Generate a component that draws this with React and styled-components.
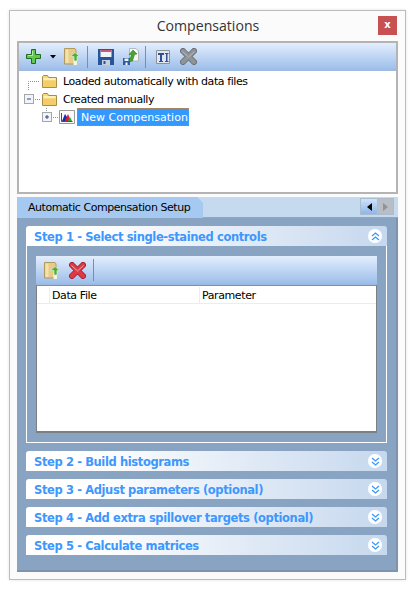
import React from "react";
import styled, { createGlobalStyle } from "styled-components";

const Global = createGlobalStyle`
  html, body { margin: 0; padding: 0; background: #fff; }
  body { font-family: "DejaVu Sans", sans-serif; font-size: 11px; color: #000; }
  * { box-sizing: border-box; }
`;
const Page = styled.div`
  width: 418px; height: 591px; padding: 10px 12px 11px 9px;
`;
const Window = styled.div`
  width: 397px; height: 570px; background: #fbfbfb; border: 1px solid #bcbcbc;
  box-shadow: 0 0 3px rgba(0,0,0,.12); display: flex; flex-direction: column; padding: 0 7px 7px 7px;
`;
const TitleBar = styled.div`
  height: 30px; flex: none; display: flex; align-items: center; justify-content: center; position: relative;
`;
const Title = styled.div`
  font-family: "Open Sans", sans-serif; font-size: 14.1px; color: #333; margin-bottom: 1px; margin-left: 1px;
`;
const Close = styled.div`
  position: absolute; right: 1px; top: 5px; width: 19px; height: 19px; background: #c75050;
  color: #fff; display: flex; align-items: center; justify-content: center;
  font: bold 10px "DejaVu Sans", sans-serif; padding-bottom: 2px;
`;
const TreePanel = styled.div`
  flex: none; height: 153px; border: 2px solid #b4b4b4; background: #fff;
  display: flex; flex-direction: column;
`;
const Toolbar = styled.div`
  flex: none; height: ${p => p.$h}px; display: flex; align-items: center; padding-left: ${p => p.$pad}px;
  background: linear-gradient(#e3eefd, #9cbdea);
  border-bottom: 1px solid #9db9df;
`;
const Sep = styled.div`
  flex: none; width: 1px; height: 22px; background: #7d8ea3; margin: 0 10px 0 ${p => p.$left}px;
`;
const Tool = styled.svg`
  flex: none; display: block; margin: ${p => p.$m || "0"};
`;
const Tree = styled.div`
  padding-top: 1px; display: flex; flex-direction: column;
`;
const Row = styled.div`
  height: 18px; display: flex; align-items: center;
`;
const Gutter = styled.svg`
  flex: none; display: block;
`;
const Label = styled.span`
  margin-left: 6px; letter-spacing: -0.42px; white-space: nowrap;
`;
const Selected = styled.span`
  margin-left: 2px; width: 112px; height: 18px; background: #3399ff; color: #fff;
  border: 1px dotted #a98a6a; padding: 1px 0 0 3px; line-height: 16px; letter-spacing: 0; white-space: nowrap;
`;
const TabsPanel = styled.div`
  flex: 1; margin-top: 3px; display: flex; flex-direction: column; min-height: 0;
`;
const TabStrip = styled.div`
  flex: none; height: 21px; background: #c5d9ef; border-bottom: 1px solid #a3a3a3; display: flex; align-items: stretch; justify-content: space-between;
`;
const Tab = styled.div`
  width: 186px; height: 21px; background: #a5c9f0; padding: 2px 0 0 11px; line-height: 18px; letter-spacing: -0.45px;
  clip-path: polygon(0 0, 180px 0, 186px 6px, 186px 100%, 0 100%); white-space: nowrap;
`;
const Arrows = styled.div`
  display: flex; margin: 1px 4px 0 0; height: 17px; border: 1px solid #a9bcd2;
`;
const Arrow = styled.div`
  width: 16px; display: flex; align-items: center; justify-content: center;
  background: ${p => p.$on ? "linear-gradient(#cfe2fa, #8db6e8)" : "#b9bec5"};
`;
const TabBody = styled.div`
  flex: 1; background: #88a4c2; padding: 8px 9px 0 9px; display: flex; flex-direction: column; gap: 8px;
  border-right: 2px solid #7f93ab; border-bottom: 2px solid #7f93ab; min-height: 0;
`;
const Step = styled.div`
  display: flex; flex-direction: column; flex: none;
`;
const StepHead = styled.div`
  height: 20px; display: flex; align-items: center; justify-content: space-between; padding: 1px 5px 0 8px;
  background: linear-gradient(90deg, #fff 0%, #fff 18%, #c6d8ee 100%);
  border-radius: 3px 3px 0 0;
  font-weight: 700; color: #3d97fd; letter-spacing: -0.38px; font-size: 11.5px;
`;
const Chevron = styled.div`
  width: 14px; height: 14px; margin-top: -1px; border-radius: 50%; background: #fff; display: flex; align-items: center; justify-content: center;
  box-shadow: 0 0 1px #dbe5f2;
`;
const StepBody = styled.div`
  height: 197px; border: 1px solid #fff; border-top: 0; padding: 10px 9px 9px 9px; display: flex; flex-direction: column;
`;
const Grid = styled.div`
  flex: 1; background: #fff; border: 1px solid #7c7f84; border-top: 0; border-bottom-width: 2px; display: flex; flex-direction: column;
`;
const GridHead = styled.div`
  height: 19px; display: flex; border-top: 1px solid #7f90a8; border-bottom: 1px solid #e4edf8; padding-top: 1px; line-height: 17px;
`;
const GridCell = styled.div`
  flex: ${p => p.$w ? `0 0 ${p.$w}px` : "1"}; padding-left: ${p => p.$pad}px;
  border-right: ${p => p.$w ? "1px solid #e4edf8" : "0"}; letter-spacing: -0.4px;
`;

const Plus = () => (
  <Tool width="17" height="17" viewBox="0 0 17 17">
    <path d="M6.500 1.500h4v5h5v4h-5v5h-4v-5h-5v-4h5z" fill="#63c852" stroke="#1f6b22" strokeWidth="1" />
    <path d="M7.500 3v4.500H3" fill="none" stroke="#b4ec9e" strokeWidth="1" />
  </Tool>
);
const Caret = () => (
  <Tool $m="0 8px" width="6" height="4" viewBox="0 0 6 4"><path d="M0 0h6L3 3.500z" fill="#000" /></Tool>
);
const Import = () => (
  <Tool width="16" height="17" viewBox="0 0 16 17">
    <path d="M.5.500h10.500l1 1.500V16H.5z" fill="#e8cc86" stroke="#b29a5d" />
    <path d="M1.500 1.500h3v13.500h-3z" fill="#f3e1ae" />
    <path d="M9.500 11h3.500v6H9.500z" fill="#f8f3df" />
    <path d="M11 4.500l4.500 4H13V13h-3V8.500H6.500z" fill="#4fae3a" stroke="#eaf5e0" strokeWidth=".6" />
  </Tool>
);
const Save = () => (
  <Tool width="16" height="16" viewBox="0 0 16 16">
    <path d="M0 0h16v16H0z" fill="#27559c" />
    <path d="M2.500 1h11v7h-11z" fill="#f1f3f8" />
    <path d="M2.500 1h11v2h-11z" fill="#c85a78" />
    <path d="M4 11h8v5H4z" fill="#c9d0dc" />
    <path d="M5.500 12h2v3h-2z" fill="#27559c" />
  </Tool>
);
const Export = () => (
  <Tool $m="0 0 0 9px" width="16" height="17" viewBox="0 0 16 17">
    <path d="M6.500.500h6.500l2.500 2.500V13h-9z" fill="#f7f7f7" stroke="#a6aab0" strokeWidth=".8" />
    <path d="M0 10h7v7H0z" fill="#2a5ca8" />
    <path d="M1.500 10.500h4v2.500h-4z" fill="#f3f3f3" />
    <path d="M2.500 14.500h2v2.500h-2z" fill="#fff" />
    <path d="M10 2l4 4-2.500.5-2 6.500-4 1 3-7-2.500-.5z" fill="#45a633" stroke="#1f6f22" strokeWidth=".5" />
  </Tool>
);
const TextTool = () => (
  <Tool width="14" height="14" viewBox="0 0 14 14">
    <path d="M.5.500h13v13H.5z" fill="#dfe7f2" stroke="#8d9198" />
    <path d="M2 3h6v2H6v6h1v1H3v-1h1V5H2z" fill="#2d4f93" />
    <path d="M9 3h3.500v1H11.500v7H12.500v1H9v-1h1V4H9z" fill="#35538e" />
  </Tool>
);
const Cross = ({ dark, main, light, m }) => (
  <Tool $m={m} width="17" height="17" viewBox="0 0 17 17">
    <path d="M3 3l11 11M14 3L3 14" stroke={dark} strokeWidth="6" strokeLinecap="round" />
    <path d="M3 3l11 11M14 3L3 14" stroke={main} strokeWidth="4.400" strokeLinecap="round" />
    <path d="M2.500 3.500l6 5.500 6-5.500" fill="none" stroke={light} strokeWidth="1" />
  </Tool>
);
const Folder = () => (
  <Tool $m="0 0 0 1px" width="15" height="13" viewBox="0 0 15 13">
    <path d="M.5 12.500V1.500l1-1h4l1 2h8v10z" fill="#f6d87c" stroke="#a98d46" />
    <path d="M1.500 4h12" stroke="#fff6cf" strokeWidth="1.500" />
    <path d="M1.500 6h12v6h-12z" fill="#f3cd68" />
  </Tool>
);
const ChartIcon = () => (
  <Tool width="16" height="14" viewBox="0 0 16 14">
    <path d="M.5.500h15v13H.5z" fill="#fafafa" stroke="#9a9a9a" />
    <path d="M3 11L6 4l2 3 1 4z" fill="#1a2ab8" />
    <path d="M6 11l3-7 3 7z" fill="#d6232a" />
    <path d="M9 11l2-4 2 4z" fill="#22a838" />
    <path d="M2.500 3v8.500H13.500" fill="none" stroke="#222" strokeWidth=".8" />
  </Tool>
);
const Expander = ({ x, y, plus }) => (
  <g>
    <rect x={x + .5} y={y + .5} width="9" height="9" fill="#f2f4f8" stroke="#a3a6ab" />
    <path d={`M${x + 3} ${y + 5}h4`} stroke="#2b4a8a" />
    {plus && <path d={`M${x + 5} ${y + 3}v4`} stroke="#2b4a8a" />}
  </g>
);
const Dots = { stroke: "#8f8f8f", strokeDasharray: "1 1", fill: "none" };
const Chev = ({ up }) => (
  <svg width="9" height="9" viewBox="0 0 9 9">
    <path d={up ? "M1 4l3.500-3L8 4M1 8l3.500-3L8 8" : "M1 1l3.500 3L8 1M1 5l3.500 3L8 5"} fill="none" stroke="#3d97fd" strokeWidth="1.300" />
  </svg>
);

const steps = ["Step 2 - Build histograms", "Step 3 - Adjust parameters (optional)", "Step 4 - Add extra spillover targets (optional)", "Step 5 - Calculate matrices"];

export default function App() {
  return (
    <Page>
      <Global />
      <Window>
        <TitleBar>
          <Title>Compensations</Title>
          <Close>x</Close>
        </TitleBar>
        <TreePanel>
          <Toolbar $h={28} $pad={6}>
            <Plus /><Caret /><Import /><Sep $left={7} /><Save /><Export /><Sep $left={6} /><TextTool />
            <Cross m="0 0 0 10px" dark="#666b70" main="#8f9499" light="#b4b8bc" />
          </Toolbar>
          <Tree>
            <Row>
              <Gutter width="22" height="18" viewBox="0 0 22 18"><path d="M9.500 18V9.500H21" {...Dots} /></Gutter>
              <Folder /><Label>Loaded automatically with data files</Label>
            </Row>
            <Row>
              <Gutter width="22" height="18" viewBox="0 0 22 18"><path d="M14 9.500H21" {...Dots} /><Expander x={5} y={4} plus={false} /></Gutter>
              <Folder /><Label>Created manually</Label>
            </Row>
            <Row>
              <Gutter width="40" height="18" viewBox="0 0 40 18"><path d="M27.500 0V5M32 9.500H39" {...Dots} /><Expander x={23} y={4} plus /></Gutter>
              <ChartIcon /><Selected>New Compensation</Selected>
            </Row>
          </Tree>
        </TreePanel>
        <TabsPanel>
          <TabStrip>
            <Tab>Automatic Compensation Setup</Tab>
            <Arrows>
              <Arrow $on><svg width="5" height="8" viewBox="0 0 5 8"><path d="M5 0v8L0 4z" fill="#000" /></svg></Arrow>
              <Arrow><svg width="5" height="8" viewBox="0 0 5 8"><path d="M0 0v8l5-4z" fill="#8f9499" /></svg></Arrow>
            </Arrows>
          </TabStrip>
          <TabBody>
            <Step>
              <StepHead>Step 1 - Select single-stained controls<Chevron><Chev up /></Chevron></StepHead>
              <StepBody>
                <Toolbar $h={29} $pad={8}>
                  <Import /><Cross m="0 0 0 9px" dark="#a31f2b" main="#de3a45" light="#f5a3a7" /><Sep $left={7} />
                </Toolbar>
                <Grid>
                  <GridHead>
                    <GridCell $w={13} $pad={0} />
                    <GridCell $w={150} $pad={2}>Data File</GridCell>
                    <GridCell $pad={2}>Parameter</GridCell>
                  </GridHead>
                </Grid>
              </StepBody>
            </Step>
            {steps.map(s => (
              <Step key={s}>
                <StepHead>{s}<Chevron><Chev /></Chevron></StepHead>
              </Step>
            ))}
          </TabBody>
        </TabsPanel>
      </Window>
    </Page>
  );
}
